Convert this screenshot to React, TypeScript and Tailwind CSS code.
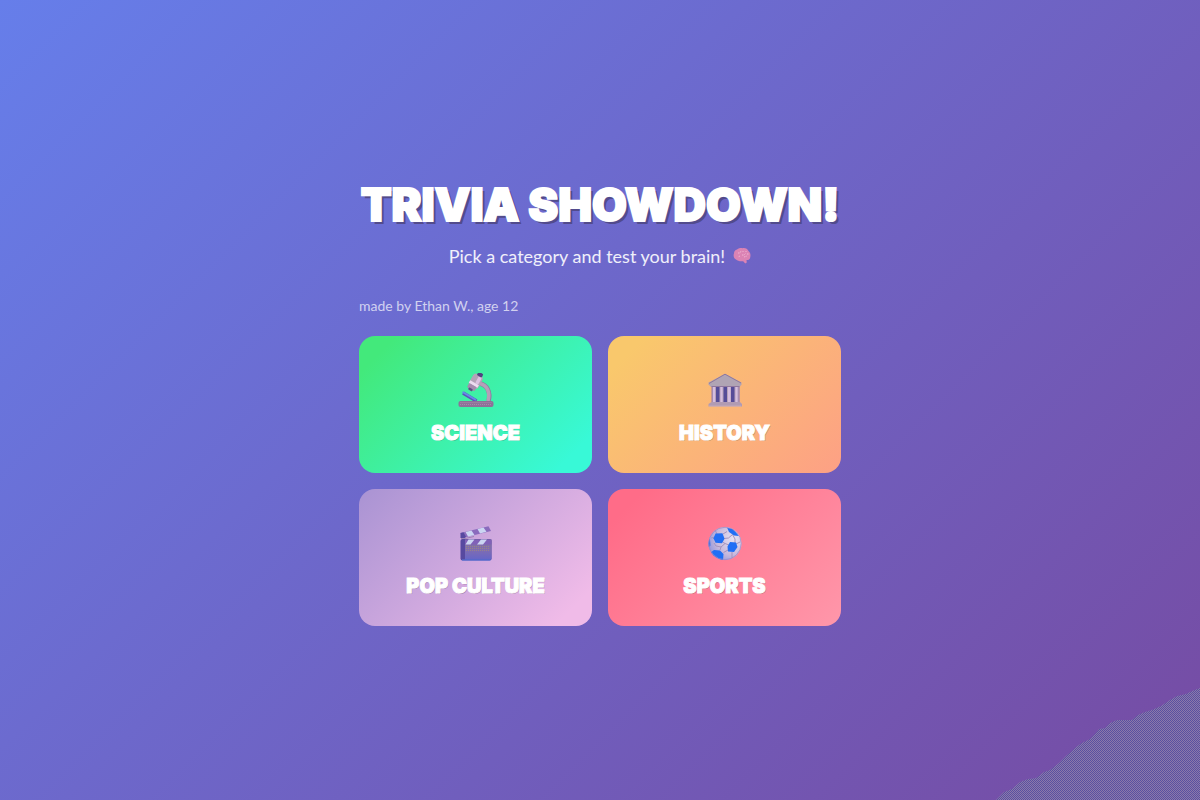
import type { ComponentType } from 'react'

interface Category {
  id: string
  name: string
  gradient: string
  Icon: ComponentType
}

function MicroscopeIcon() {
  return (
    <svg viewBox="0 0 36 36" className="size-9" aria-hidden="true">
      <path d="M22 10.500C29 12 33 19 30.500 28" fill="none" stroke="#8d78a0" strokeWidth="4.500" />
      <path d="M22 10.500C29 12 32.500 19 30 28" fill="none" stroke="#b5a0b8" strokeWidth="3.500" />
      <path d="M5 20 18.500 28" stroke="#5b53ba" strokeWidth="3.500" />
      <path d="M4.500 19 18 27" stroke="#658ce8" strokeWidth="2" />
      <g transform="rotate(30 17 10)">
        <rect x="11.500" y="1" width="10.500" height="14" rx="3" fill="#b4a2b8" />
        <rect x="17" y="2" width="3.500" height="8" rx="1.500" fill="#dcc2e2" />
        <rect x="11.500" y="10" width="10" height="3" fill="#eddcf1" />
        <rect x="12" y="13" width="8.500" height="4.500" rx="1" fill="#a58caf" />
        <rect x="14" y="16.500" width="4.500" height="2.500" rx="1" fill="#614d83" />
        <rect x="14.500" y="-1.800" width="5.500" height="4" rx="1.200" fill="#514180" />
      </g>
      <rect x="0.500" y="28" width="35" height="6" rx="2" fill="#8e7198" />
      <path d="M2.500 29.500h31M2 31.500h32" stroke="#a58baa" strokeWidth="1" strokeDasharray="1 1" />
    </svg>
  )
}

function MuseumIcon() {
  return (
    <svg viewBox="0 0 36 36" className="size-9" aria-hidden="true">
      <rect x="5" y="13" width="27.500" height="17" fill="#b5a0b8" />
      <path d="M6 14h2v15H6zM13.500 14h2v15h-2zM21 14h2.500v15H21zM28.500 14h2v15h-2z" fill="#d5bddf" />
      <path d="M9 13h3.500v17H9zM16.500 13H20v17h-3.500zM24 13h3.500v17H24z" fill="#554c98" />
      <path d="M5 13v16M32 13v16" stroke="#9a7ba8" />
      <path d="M18 .800 34.500 9.500v2l-2 2.500H4l-2.500-2.500v-2z" fill="#b0a4b4" />
      <path d="M2 10.500 18 1.200l16 8.800" fill="none" stroke="#8f779e" strokeWidth="1" />
      <path d="M4.500 13.500h28" stroke="#8f779e" />
      <path d="M4.500 29H33l2 2v2.500H1.500V31z" fill="#b19bb3" />
      <path d="M2.500 33h32" stroke="#d6b9c5" strokeDasharray="1 1" />
    </svg>
  )
}

function ClapperIcon() {
  return (
    <svg viewBox="0 0 36 36" className="size-9" aria-hidden="true">
      <defs>
        <linearGradient id="slate" x1="0" y1="0" x2="0" y2="1">
          <stop offset="0" stopColor="#80719c" />
          <stop offset="0.5" stopColor="#806db0" />
          <stop offset="1" stopColor="#6665c8" />
        </linearGradient>
      </defs>
      <path d="M2.500 7 30.500.200 33 5 4.500 12z" fill="#8a6bbd" />
      <path d="m2.500 7 3-.800L8 11l-3.500 2.500-2-2z" fill="#5749a0" />
      <path d="m7.500 6 6-1.500 3 4.500-6.500 1.500zM19.500 3l6-1.500 3 4.300L22 7.500z" fill="#cbd5f2" />
      <path d="M3 12.500h4l9-2" fill="none" stroke="#9b82b4" strokeWidth="1" />
      <rect x="2.500" y="13" width="31" height="21.500" rx="2" fill="#5749a0" />
      <path d="M7 13.500h26.500v20H7z" fill="url(#slate)" />
      <path d="M7 13.500h26.500v5H7z" fill="#8061b8" />
      <path d="M10.500 13.500h6l-4 5H7.500zM23 13.500h6l-4 5h-6z" fill="#cbd5f2" />
      <path d="M8 20.500h24M8 22.500h24M8 24.500h24" stroke="#988389" strokeDasharray="1 1" />
      <path d="M4 34h28.500" stroke="#5378df" />
    </svg>
  )
}

function SoccerIcon() {
  return (
    <svg viewBox="0 0 36 36" className="size-9" aria-hidden="true">
      <defs>
        <radialGradient id="leather" cx="0.75" cy="0.35" r="0.85">
          <stop offset="0" stopColor="#e6e1f1" />
          <stop offset="0.6" stopColor="#c7b8dc" />
          <stop offset="1" stopColor="#8b91db" />
        </radialGradient>
        <clipPath id="ball">
          <circle cx="18" cy="17.500" r="16.500" />
        </clipPath>
      </defs>
      <circle cx="18" cy="17.500" r="16.500" fill="url(#leather)" />
      <g clipPath="url(#ball)">
        <path
          d="m16 8 4-2.500M17 12.500l4.500-.5 4-3.500M15.500 16l2.500 1.500 4 1.500M18 17.500 14 21l-5-1-2-3M14 21l-1 3M16.500 26.500l4.500-2.500M25.500 8.500 28 13v4M4 12l4-1M10 8 8 4M29 18l4-2M25 26v6"
          fill="none"
          stroke="#a493bd"
          strokeWidth="1"
        />
        <path d="m8.500 7.500 7-.200 2 5.500-2.500 4.500-6.500-.500-2-4.500z" fill="#216ff5" />
        <path d="m23 16 6 .500 1.500 4.500-3.500 5-6-.500-.500-5z" fill="#216ff5" />
        <path d="M20 1.500 26 3l6 7-5-.500-5-3.500z" fill="#216ff5" />
        <path d="m7 24 6 .500 3.500 3.500-.500 6H8l-5-7z" fill="#216ff5" />
        <path d="m0 12.500 3 1 .500 6L1 22z" fill="#376ee6" />
      </g>
      <circle cx="18" cy="17.500" r="16.200" fill="none" stroke="#9a86c5" strokeWidth="0.700" />
    </svg>
  )
}

function BrainIcon() {
  return (
    <svg viewBox="0 0 18 18" className="size-[18px]" aria-hidden="true">
      <path
        d="M4 2.500C6 1 8 1 9.500 1.200c3-.500 5 .800 6 2.800 2 1.500 2.300 4 1.700 6.500-.4 2-2 2.700-3.700 2.500l.3 2.500-1.600 1-2-2.300C7 14.500 4.500 14 3 12.500.5 11.500.2 8 1 6.500 1 4.500 2 3 4 2.500z"
        fill="#db83b4"
      />
      <path
        d="M5 6h2l1-2M9 8h2l2-2M13 4v1M11 10l3-1M14 7h2M7 9l-2 1M10 4v1"
        fill="none"
        stroke="#efb3d2"
        strokeWidth="1"
        strokeDasharray="1.500 1"
      />
    </svg>
  )
}

// Textured hill in the bottom corner of the page
function CornerHill() {
  return (
    <svg viewBox="0 0 204 114" className="absolute right-0 bottom-0 h-[114px] w-[204px]" aria-hidden="true">
      <defs>
        <pattern id="grain" width="4" height="4" patternUnits="userSpaceOnUse">
          <rect width="4" height="4" fill="#8c79ab" />
          <path d="M0 0h1v1H0zM2 0h1v1H2zM1 1h1v1H1zM3 1h1v1H3zM0 2h1v1H0zM2 2h1v1H2zM1 3h1v1H1zM3 3h1v1H3z" fill="#5951a0" />
        </pattern>
      </defs>
      <path
        d="M0 114 8 106 16 103 24 96 32 93 40 92 48 86 54 84 63 77 70 70 76 65 80 61 86 57 94 53 99 48 103 43 109 42 114 37 121 34 136 34 142 29 149 26 156 24 165 20 174 14 181 10 190 8 196 5 204 2V114z"
        fill="url(#grain)"
      />
    </svg>
  )
}

const categories: Category[] = [
  { id: 'science', name: 'SCIENCE', gradient: 'from-[#43e97b] from-10% to-[#38f9d7] to-90%', Icon: MicroscopeIcon },
  { id: 'history', name: 'HISTORY', gradient: 'from-[#f9c86c] from-10% to-[#fda085]', Icon: MuseumIcon },
  { id: 'pop', name: 'POP CULTURE', gradient: 'from-[#a993d3] to-[#f0bbe8] to-90%', Icon: ClapperIcon },
  { id: 'sports', name: 'SPORTS', gradient: 'from-[#ff6c88] from-10% to-[#ff97aa]', Icon: SoccerIcon },
]

function CategoryCard({ category }: { category: Category }) {
  const { name, gradient, Icon } = category
  return (
    <button
      type="button"
      className={`flex flex-col items-center rounded-2xl bg-linear-135/srgb px-4 pt-[37px] pb-7 ${gradient}`}
    >
      <Icon />
      <span className="mt-3 font-['Inter',sans-serif] text-[20px] leading-6 font-black text-white [-webkit-text-stroke:1px_white] [text-shadow:1px_1px_0_rgba(0,0,0,0.2)]">
        {name}
      </span>
    </button>
  )
}

export default function App() {
  return (
    <div className="relative flex min-h-screen items-center justify-center bg-linear-135/srgb from-[#667eea] to-[#764ba2] font-['Lato',sans-serif]">
      <CornerHill />
      <main className="relative w-full max-w-[482px]">
        <header className="text-center text-white">
          <h1 className="font-['Inter',sans-serif] text-[45px] leading-[62px] font-black whitespace-nowrap [-webkit-text-stroke:2px_white] [text-shadow:3px_3px_0_#524b8c]">
            TRIVIA SHOWDOWN!
          </h1>
          <p className="mt-2 flex items-center justify-center gap-2 text-[18px] leading-6 text-white/90">
            Pick a category and test your brain!
            <BrainIcon />
          </p>
        </header>
        <p className="mt-7 text-[14px] leading-5 text-white/70">made by Ethan W., age 12</p>
        <div className="mt-5 grid grid-cols-2 gap-4">
          {categories.map((category) => (
            <CategoryCard key={category.id} category={category} />
          ))}
        </div>
      </main>
    </div>
  )
}
